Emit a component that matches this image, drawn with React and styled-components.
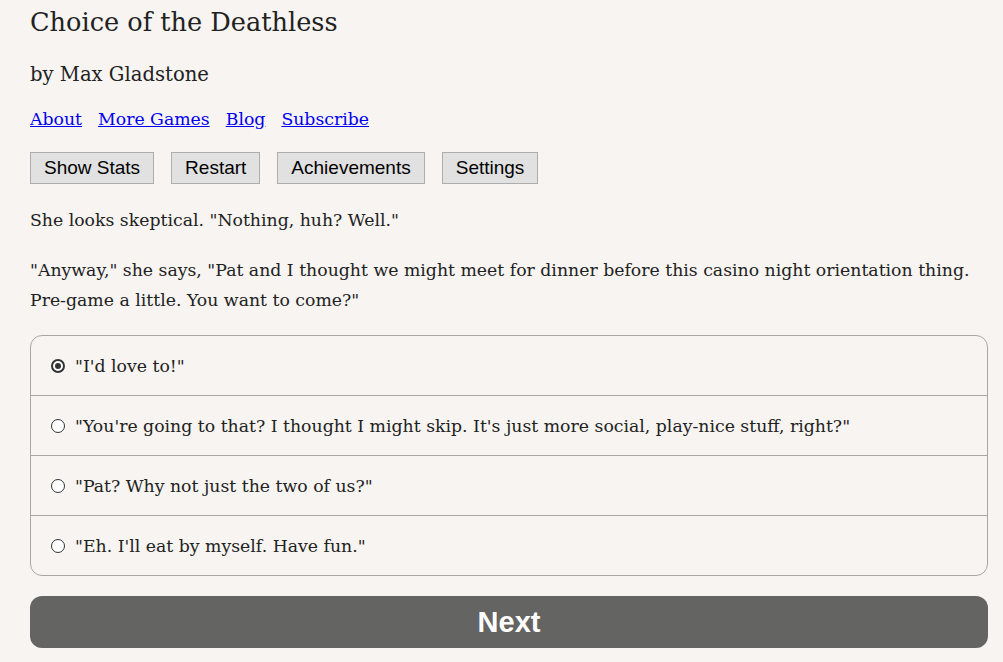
import React, { useState } from "react";
import styled, { createGlobalStyle } from "styled-components";

const GlobalStyle = createGlobalStyle`
  html, body {
    margin: 0;
    padding: 0;
    background: #f7f4f1;
  }
  body {
    color: #222;
    font-family: Georgia, "DejaVu Serif", serif;
  }
`;

const Page = styled.div`
  padding: 0 15px 0 30px;
  font-size: 17.3px;
`;

const Title = styled.h1`
  margin: 0;
  font-size: 25.6px;
  font-weight: normal;
  line-height: 44px;
`;

const Author = styled.h2`
  margin: 16px 0 0;
  font-size: 19.6px;
  font-weight: normal;
  line-height: 30px;
`;

const LinkRow = styled.nav`
  display: flex;
  gap: 16px;
  margin-top: 14px;
  line-height: 30px;
  a {
    color: #0000ee;
    text-decoration: underline;
  }
`;

const ButtonRow = styled.div`
  display: flex;
  gap: 17px;
  margin-top: 18px;
`;

const MenuButton = styled.button`
  height: 32px;
  padding: 0 13px;
  background: #e1e1e1;
  border: 1px solid #adadad;
  border-radius: 0;
  color: #000;
  font-family: Tahoma, "Liberation Sans", sans-serif;
  font-size: 19px;
  cursor: pointer;
`;

const Para = styled.p`
  margin: ${(p) => p.$top}px 0 0;
  line-height: 30px;
`;

const ChoiceList = styled.form`
  margin-top: 20px;
  border: 1px solid #aaa7a3;
  border-radius: 12px;
  overflow: hidden;
`;

const ChoiceRow = styled.label`
  display: flex;
  align-items: center;
  gap: 10px;
  height: 59px;
  padding-left: 20px;
  cursor: pointer;
  & + & {
    border-top: 1px solid #aaa7a3;
  }
`;

const Radio = styled.span`
  box-sizing: border-box;
  flex: none;
  width: 14px;
  height: 14px;
  border-radius: 50%;
  border: ${(p) => (p.$checked ? "2px solid #333" : "1px solid #333")};
  background: #fff;
  display: flex;
  align-items: center;
  justify-content: center;
  &::after {
    content: "";
    width: 6px;
    height: 6px;
    border-radius: 50%;
    background: ${(p) => (p.$checked ? "#333" : "transparent")};
  }
`;

const NextButton = styled.button`
  display: block;
  width: 100%;
  height: 52px;
  margin-top: 20px;
  border: none;
  border-radius: 12px;
  background: #646462;
  color: #fff;
  font-family: "Liberation Sans", Arial, sans-serif;
  font-weight: bold;
  font-size: 29px;
  cursor: pointer;
`;

const choices = [
  '"I\'d love to!"',
  '"You\'re going to that? I thought I might skip. It\'s just more social, play-nice stuff, right?"',
  '"Pat? Why not just the two of us?"',
  '"Eh. I\'ll eat by myself. Have fun."',
];

export default function App() {
  const [picked, setPicked] = useState(0);
  return (
    <Page>
      <GlobalStyle />
      <Title>Choice of the Deathless</Title>
      <Author>by Max Gladstone</Author>
      <LinkRow>
        <a href="#about">About</a>
        <a href="#games">More Games</a>
        <a href="#blog">Blog</a>
        <a href="#subscribe">Subscribe</a>
      </LinkRow>
      <ButtonRow>
        <MenuButton>Show Stats</MenuButton>
        <MenuButton>Restart</MenuButton>
        <MenuButton>Achievements</MenuButton>
        <MenuButton>Settings</MenuButton>
      </ButtonRow>
      <Para $top={21}>She looks skeptical. "Nothing, huh? Well."</Para>
      <Para $top={20}>
        "Anyway," she says, "Pat and I thought we might meet for dinner before
        this casino night orientation thing. Pre-game a little. You want to
        come?"
      </Para>
      <ChoiceList onSubmit={(e) => e.preventDefault()}>
        {choices.map((text, i) => (
          <ChoiceRow key={i} onClick={() => setPicked(i)}>
            <Radio $checked={picked === i} />
            {text}
          </ChoiceRow>
        ))}
      </ChoiceList>
      <NextButton>Next</NextButton>
    </Page>
  );
}
